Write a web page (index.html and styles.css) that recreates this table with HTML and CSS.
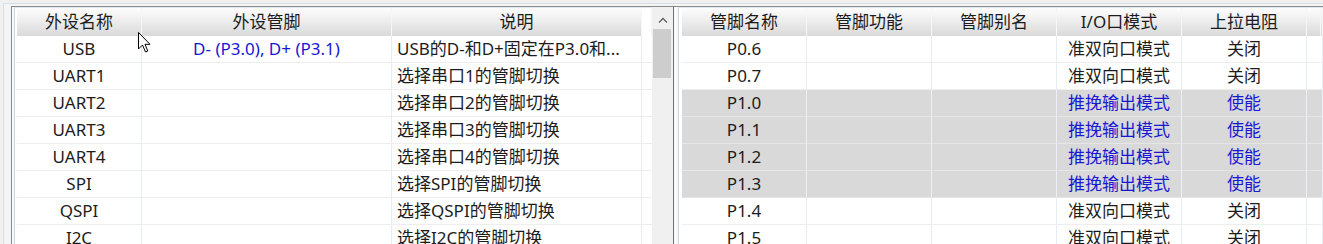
FILE: index.html
```html
<!DOCTYPE html>
<html lang="zh-CN">
<head>
<meta charset="utf-8">
<title>管脚配置</title>
<link rel="stylesheet" href="styles.css">
</head>
<body>
<div class="frame">
  <div class="panel panel-left">
    <div class="list llist">
      <div class="row hdr">
        <div class="c w125">外设名称</div>
        <div class="c w250">外设管脚</div>
        <div class="c w250">说明</div>
        <div class="c fill-h"></div>
      </div>
      <div class="row"><div class="c w125">USB</div><div class="c w250 blue">D- (P3.0), D+ (P3.1)</div><div class="c w250 left">USB的D-和D+固定在P3.0和...</div><div class="c fill"></div></div>
      <div class="row"><div class="c w125">UART1</div><div class="c w250"></div><div class="c w250 left">选择串口1的管脚切换</div><div class="c fill"></div></div>
      <div class="row"><div class="c w125">UART2</div><div class="c w250"></div><div class="c w250 left">选择串口2的管脚切换</div><div class="c fill"></div></div>
      <div class="row"><div class="c w125">UART3</div><div class="c w250"></div><div class="c w250 left">选择串口3的管脚切换</div><div class="c fill"></div></div>
      <div class="row"><div class="c w125">UART4</div><div class="c w250"></div><div class="c w250 left">选择串口4的管脚切换</div><div class="c fill"></div></div>
      <div class="row"><div class="c w125">SPI</div><div class="c w250"></div><div class="c w250 left">选择SPI的管脚切换</div><div class="c fill"></div></div>
      <div class="row"><div class="c w125">QSPI</div><div class="c w250"></div><div class="c w250 left">选择QSPI的管脚切换</div><div class="c fill"></div></div>
      <div class="row"><div class="c w125">I2C</div><div class="c w250"></div><div class="c w250 left">选择I2C的管脚切换</div><div class="c fill"></div></div>
    </div>
    <div class="sb">
      <div class="sb-up"><svg width="10" height="6" viewBox="0 0 10 6"><path d="M1 5.5 L5 1.5 L9 5.5" fill="none" stroke="#606060" stroke-width="1.3"/></svg></div>
      <div class="sb-thumb"></div>
    </div>
  </div>
  <div class="panel panel-right">
    <div class="list rlist">
      <div class="row hdr">
        <div class="c w125">管脚名称</div>
        <div class="c w125">管脚功能</div>
        <div class="c w125">管脚别名</div>
        <div class="c w125">I/O口模式</div>
        <div class="c w125">上拉电阻</div>
        <div class="c w14"></div>
        <div class="c fill-h"></div>
      </div>
      <div class="row"><div class="c w125">P0.6</div><div class="c w125"></div><div class="c w125"></div><div class="c w125">准双向口模式</div><div class="c w125">关闭</div><div class="c rest"></div></div>
      <div class="row"><div class="c w125">P0.7</div><div class="c w125"></div><div class="c w125"></div><div class="c w125">准双向口模式</div><div class="c w125">关闭</div><div class="c rest"></div></div>
      <div class="row sel"><div class="c w125">P1.0</div><div class="c w125"></div><div class="c w125"></div><div class="c w125 blue">推挽输出模式</div><div class="c w125 blue">使能</div><div class="c rest"></div></div>
      <div class="row sel"><div class="c w125">P1.1</div><div class="c w125"></div><div class="c w125"></div><div class="c w125 blue">推挽输出模式</div><div class="c w125 blue">使能</div><div class="c rest"></div></div>
      <div class="row sel"><div class="c w125">P1.2</div><div class="c w125"></div><div class="c w125"></div><div class="c w125 blue">推挽输出模式</div><div class="c w125 blue">使能</div><div class="c rest"></div></div>
      <div class="row sel"><div class="c w125">P1.3</div><div class="c w125"></div><div class="c w125"></div><div class="c w125 blue">推挽输出模式</div><div class="c w125 blue">使能</div><div class="c rest"></div></div>
      <div class="row"><div class="c w125">P1.4</div><div class="c w125"></div><div class="c w125"></div><div class="c w125">准双向口模式</div><div class="c w125">关闭</div><div class="c rest"></div></div>
      <div class="row"><div class="c w125">P1.5</div><div class="c w125"></div><div class="c w125"></div><div class="c w125">准双向口模式</div><div class="c w125">关闭</div><div class="c rest"></div></div>
    </div>
  </div>
</div>
<svg class="cursor" width="14" height="22" viewBox="0 0 14 22"><path d="M0.5 0.5 L0.5 17 L4.5 13 L7.5 20 L9.8 19 L7 12.3 L12 12.3 Z" fill="#fff" stroke="#000" stroke-width="1" stroke-linejoin="miter"/></svg>
</body>
</html>
```

FILE: styles.css
```css
html, body {
  margin: 0;
  padding: 0;
  height: 244px;
  overflow: hidden;
  background: #f0f0f0;
  font-family: "Noto Sans", "Noto Sans CJK SC", sans-serif;
  font-size: 17px;
  color: #1c1c1c;
}

.frame {
  margin: 3px 0 0 3px;
  border-top: 1px solid #d6dfe9;
  border-left: 1px solid #d6dfe9;
  padding: 2px 0 0 7px;
  height: 241px;
  box-sizing: border-box;
  display: flex;
  background: #f4f4f4;
}

.panel {
  display: flex;
  border-top: 1px solid #8a8a8a;
  background: #f7f9fb;
}

.panel-left {
  width: 663px;
  box-sizing: border-box;
  border-left: 1px solid #8a8a8a;
  border-right: 1px solid #6f6f6f;
  padding-left: 2px;
  flex: none;
}

.panel-right {
  flex: 1;
  padding-left: 4px;
  margin-left: 0;
  min-width: 0;
}

.list {
  border-top: 1px solid #e4eaf1;
  border-left: 1px solid #c8d5e3;
  padding-left: 2px;
  background: #fff;
  overflow: hidden;
}

.llist {
  width: 638px;
  box-sizing: border-box;
  flex: none;
}

.rlist {
  flex: 1;
  padding-left: 3px;
  min-width: 0;
}

.row {
  display: flex;
  height: 27px;
  white-space: nowrap;
}

.c {
  box-sizing: border-box;
  height: 27px;
  line-height: 26px;
  border-right: 1px solid #e8edf3;
  border-bottom: 1px solid #eeeeee;
  text-align: center;
  overflow: hidden;
  flex: none;
}

.w125 { width: 125px; }
.w250 { width: 250px; }
.w14 { width: 14px; }
.fill { width: 10px; border-right: none; }
.fill-h { flex: 1; background: #fff; border: none; }
.rest { flex: 1; }

.left {
  text-align: left;
  padding-left: 5px;
}

.blue { color: #1818d2; }

.hdr { height: 28px; }
.hdr .c {
  height: 28px;
  line-height: 28px;
  border-bottom: none;
  border-right: 1px solid #f6f6f6;
  background: linear-gradient(#fdfdfd 0%, #eeeeee 45%, #d9d9d9 100%);
}
.hdr .fill-h { background: #fff; }
.rlist .hdr .fill-h { background: linear-gradient(#fdfdfd 0%, #eeeeee 45%, #d9d9d9 100%); }

.sel .c { background: #d9d9d9; border-right-color: #eceff3; border-bottom-color: #e6e6e6; }

.sb {
  width: 21px;
  flex: none;
  background: #f0f0f0;
  display: flex;
  flex-direction: column;
}

.sb-up {
  height: 22px;
  display: flex;
  align-items: center;
  justify-content: center;
  padding-top: 3px;
  box-sizing: border-box;
}

.sb-thumb {
  height: 49px;
  margin: 0 2px 0 1px;
  background: #cdcdcd;
}

.cursor {
  position: absolute;
  left: 138px;
  top: 32px;
}
```
